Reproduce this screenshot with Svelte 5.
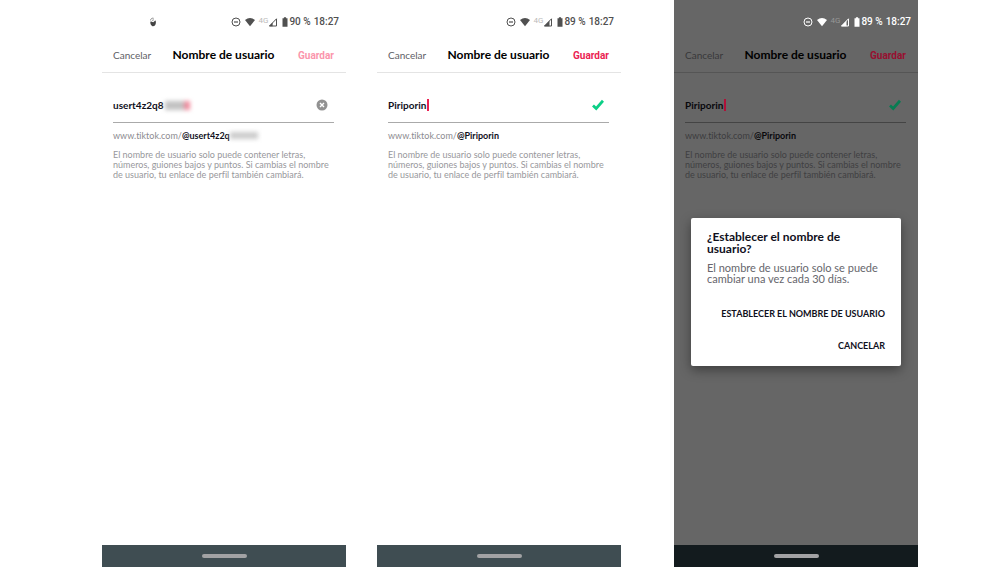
<script>
  const help =
    'El nombre de usuario solo puede contener letras, números, guiones bajos y puntos. Si cambias el nombre de usuario, tu enlace de perfil también cambiará.';
  const screens = [
    { id: 'a', cls: 'one', name: 'usert4z2q8', link: '@usert4z2q', battery: '90 %', hidden: true, valid: false, dialog: false },
    { id: 'b', cls: 'two', name: 'Piriporin', link: '@Piriporin', battery: '89 %', hidden: false, valid: true, dialog: false },
    { id: 'c', cls: 'three', name: 'Piriporin', link: '@Piriporin', battery: '89 %', hidden: false, valid: true, dialog: true }
  ];
</script>

<main>
  {#each screens as s (s.id)}
    <section class="phone {s.cls}" class:dim={s.dialog}>
      <div class="status">
        {#if s.hidden}
          <svg class="app" viewBox="0 0 8 10" width="8" height="10" aria-hidden="true">
            <path d="M1.4 4.8C2 3.9 3 5.3 4.2 5.2 5.4 5.1 5.4 3.6 6.6 3.6 7.5 6.4 6.2 9.3 4.2 9.3S1 6.8 1.4 4.8Z" fill="#444" />
            <path d="M1.6 3.4C1.6 1.6 3.2.9 4.6 1.3M3.2 3.4 4.8 2.8" fill="none" stroke="#777" stroke-width=".9" />
          </svg>
        {/if}
        <svg viewBox="0 0 10 10" width="10" height="10" aria-hidden="true">
          <circle cx="5" cy="5" r="4" fill="none" stroke="currentColor" />
          <path d="M3 5h4" stroke="currentColor" stroke-width="1.2" />
        </svg>
        <svg class="wifi" viewBox="0 0 12 10" width="12" height="10" aria-hidden="true">
          <path d="M1 3Q6-.8 11 3L6 9.2Z" fill="currentColor" />
        </svg>
        <span class="net">4G</span>
        <svg class="signal" viewBox="0 0 10 10" width="10" height="10" aria-hidden="true">
          <path d="M1.5 9 8.5 1.8V9Z" fill="none" stroke="currentColor" />
          <path d={s.valid ? 'M1 9.3 6.5 3.7V9.3Z' : 'M1 9.3 4.6 5.6V9.3Z'} fill="currentColor" />
        </svg>
        <svg class="battery" viewBox="0 0 6 10" width="6" height="10" aria-hidden="true">
          <path d="M.5 1.3H1.9V.3H4.1V1.3H5.5V9.7H.5Z" fill="currentColor" />
        </svg>
        <span>{s.battery}</span>
        <span class="time">18:27</span>
      </div>

      <header>
        <button class="cancel">Cancelar</button>
        <h1>Nombre de usuario</h1>
        <button class="save" class:faded={!s.valid}>Guardar</button>
      </header>

      <div class="form">
        <div class="field">
          <input id="name-{s.id}" aria-label="Nombre de usuario" value={s.name} style="width: {s.hidden ? 52 : 39}px" />
          {#if s.hidden}
            <span class="smudge"></span>
          {:else}
            <span class="caret"></span>
          {/if}
          {#if s.valid}
            <svg class="mark" viewBox="0 0 12 12" width="12" height="12" aria-hidden="true">
              <path d="M1 6.4 4.2 9.4 11 1.8" fill="none" stroke="currentColor" stroke-width="2.8" />
            </svg>
          {:else}
            <button class="clear" aria-label="Borrar">
              <svg viewBox="0 0 12 12" width="12" height="12" aria-hidden="true">
                <circle cx="6" cy="6" r="5.5" fill="#929292" />
                <path d="M4 4 8 8M8 4 4 8" stroke="#fff" stroke-width="1.4" />
              </svg>
            </button>
          {/if}
        </div>
        <p class="link">www.tiktok.com/<b>{s.link}</b>{#if s.hidden}<span class="smudge small"></span>{/if}</p>
        <p class="help">{help}</p>
      </div>

      {#if s.dialog}
        <div class="dialog" role="dialog" aria-labelledby="dialog-title">
          <h2 id="dialog-title">¿Establecer el nombre de usuario?</h2>
          <p>El nombre de usuario solo se puede cambiar una vez cada 30 días.</p>
          <button>ESTABLECER EL NOMBRE DE USUARIO</button>
          <button>CANCELAR</button>
        </div>
      {/if}

      <div class="nav"><span></span></div>
    </section>
  {/each}
</main>

<style>
  :global(body) {
    margin: 0;
    background: #fff;
  }
  main {
    display: grid;
    grid-template-columns: 102fr 244fr 31fr 244fr 53fr 244fr 82fr;
    min-height: 100vh;
    font-family: Lato, sans-serif;
    font-variant-ligatures: none;
  }
  .phone {
    --text: #10101c;
    --muted: #8b8b90;
    --help: #98989c;
    --cancel: #606066;
    --save: #ea2252;
    --ok: #0ccf86;
    --line: #e4e4e4;
    --rule: #aaa;
    --icon: #505050;
    --net: #bbb;
    --nav: #3f4d52;
    position: relative;
    display: flex;
    flex-direction: column;
    background: #fff;
    color: var(--text);
  }
  .one { grid-column: 2; }
  .two { grid-column: 4; }
  .three { grid-column: 6; }
  .dim {
    --text: #08080c;
    --muted: #3c3c3e;
    --help: #404042;
    --cancel: #38383a;
    --save: #980f30;
    --ok: #087c52;
    --line: #555;
    --rule: #444;
    --icon: #fff;
    --net: #969696;
    --nav: #131b1e;
    background: #666;
  }
  button {
    padding: 0;
    border: 0;
    background: none;
    font-family: inherit;
    color: inherit;
  }
  h1, h2, p { margin: 0; }
  .status {
    display: flex;
    align-items: center;
    justify-content: flex-end;
    height: 38px;
    padding: 5px 7px 0 0;
    box-sizing: border-box;
    color: var(--icon);
    font: 500 10px/12px Roboto, sans-serif;
  }
  .app { margin: 0 auto 0 47px; }
  .wifi { margin-left: 3px; }
  .net {
    margin-left: 2px;
    color: var(--net);
    font-size: 8px;
    font-weight: 400;
    line-height: 14px;
    height: 16px;
  }
  .battery { margin: 0 1px 0 4px; }
  .time { margin-left: 3px; }
  header {
    display: grid;
    grid-template-columns: 1fr auto 1fr;
    align-items: center;
    height: 35px;
    padding: 0 12px 0 11px;
    box-sizing: border-box;
    border-bottom: 1px solid var(--line);
  }
  h1 { font-size: 12px; line-height: 16px; font-weight: 700; color: #000; }
  .cancel { justify-self: start; font-size: 10px; line-height: 14px; color: var(--cancel); }
  .save {
    justify-self: end;
    padding-top: 2px;
    font: 700 10px/14px Roboto, sans-serif;
    color: var(--save);
  }
  .faded { color: #fb95ac; }
  .form { flex: 1; padding: 15px 12px 0 11px; }
  .field {
    display: flex;
    align-items: center;
    height: 34px;
    border-bottom: 1px solid var(--rule);
  }
  input {
    padding: 0;
    border: 0;
    outline: 0;
    background: none;
    font: 700 10px/14px Lato, sans-serif;
    color: var(--text);
  }
  .caret { width: 2px; height: 12px; background: #ea2252; }
  .dim .caret { background: #b01038; }
  .smudge {
    display: inline-block;
    width: 25px;
    height: 9px;
    background: linear-gradient(90deg, #c2c2c2 70%, #f2889b 85%);
    filter: blur(2px);
  }
  .small { width: 28px; height: 7px; background: #ccc; }
  .mark { margin: 0 5px 0 auto; color: var(--ok); }
  .clear { display: flex; margin: 0 6px 0 auto; }
  .link { margin-top: 6px; font-size: 9px; line-height: 14px; color: var(--muted); }
  .link b { font-weight: 700; color: var(--text); }
  .help { margin-top: 7px; font-size: 9px; line-height: 10px; color: var(--help); }
  .dialog {
    position: absolute;
    top: 218px;
    left: 17px;
    right: 17px;
    display: flex;
    flex-direction: column;
    padding: 13px 16px;
    border-radius: 2px;
    background: #fff;
    color: #10101c;
    box-shadow: 0 4px 12px rgba(0, 0, 0, 0.4);
  }
  .dialog h2 { font-size: 12px; line-height: 12px; font-weight: 700; }
  .dialog p { margin: 7px 0 23px; font-size: 11px; line-height: 11px; color: #66666c; }
  .dialog button {
    align-self: flex-end;
    font-size: 9px;
    line-height: 14px;
    font-weight: 700;
    text-align: right;
  }
  .dialog button + button { margin-top: 18px; }
  .nav {
    display: flex;
    align-items: center;
    justify-content: center;
    height: 22px;
    background: var(--nav);
  }
  .nav span { width: 45px; height: 4px; border-radius: 2px; background: #a2a2a4; }
</style>
